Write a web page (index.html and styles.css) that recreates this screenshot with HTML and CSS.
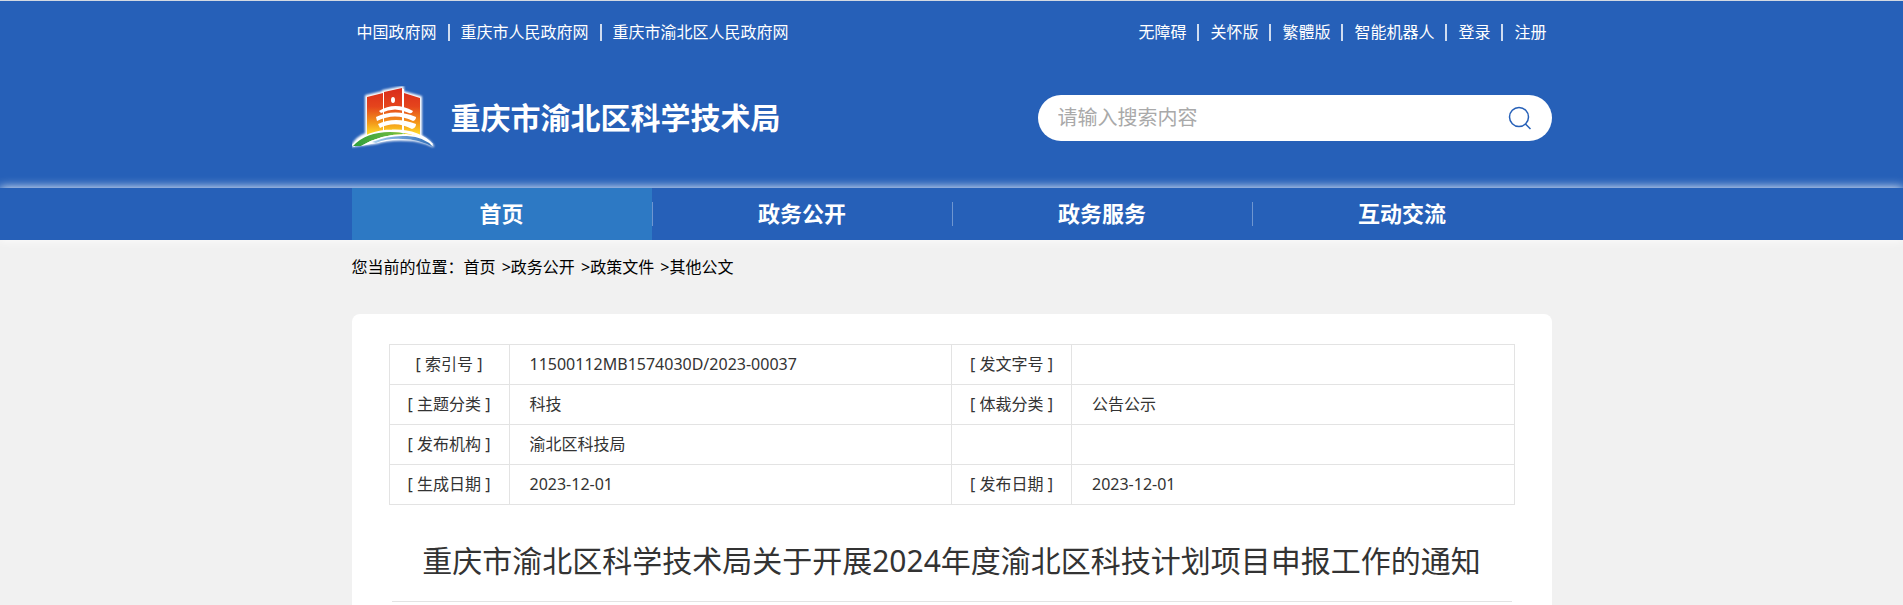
FILE: index.html
```html
<!DOCTYPE html>
<html lang="zh-CN">
<head>
<meta charset="utf-8">
<meta name="viewport" content="width=device-width, initial-scale=1">
<title>重庆市渝北区科学技术局</title>
<link rel="stylesheet" href="styles.css">
</head>
<body>
<header class="header">
  <div class="container">
    <div class="topbar">
      <nav class="toplinks" aria-label="政府网站">
        <a href="#">中国政府网</a>
        <a href="#">重庆市人民政府网</a>
        <a href="#">重庆市渝北区人民政府网</a>
      </nav>
      <nav class="toplinks" aria-label="工具">
        <a href="#">无障碍</a>
        <a href="#">关怀版</a>
        <a href="#">繁體版</a>
        <a href="#">智能机器人</a>
        <a href="#">登录</a>
        <a href="#">注册</a>
      </nav>
    </div>
    <div class="masthead">
      <a class="brand" href="#">
        <svg class="brand-logo" viewBox="0 0 84 64" aria-hidden="true">
          <defs>
            <linearGradient id="wall" gradientUnits="userSpaceOnUse" x1="0" y1="2" x2="0" y2="49">
              <stop offset="0" stop-color="#d92b1c"/>
              <stop offset=".4" stop-color="#e5451c"/>
              <stop offset=".75" stop-color="#f49a1a"/>
              <stop offset="1" stop-color="#ffe02a"/>
            </linearGradient>
            <linearGradient id="river" x1="0" y1="0" x2="1" y2="0">
              <stop offset="0" stop-color="#a9d0f0"/>
              <stop offset="1" stop-color="#2c6cb8"/>
            </linearGradient>
            <linearGradient id="hill" x1="0" y1="0" x2="1" y2="0">
              <stop offset="0" stop-color="#2f9e3c"/>
              <stop offset="1" stop-color="#7cc242"/>
            </linearGradient>
            <filter id="glow" x="-10%" y="-10%" width="120%" height="120%">
              <feGaussianBlur stdDeviation="1"/>
            </filter>
          </defs>
          <path filter="url(#glow)" fill="#fff" stroke="#fff" stroke-width="2" stroke-linejoin="round" d="M14 48V10L31 6V5L51 1V6L69 11V50Q77 54 81 60Q68 54 55 54Q38 53 24 57L0 60Q5 51 14 48Z"/>
          <path fill="url(#wall)" d="M15 11L31 7V49H15ZM32 6L50 2V49H32ZM52 7L68 12V50H52Z"/>
          <path fill="#fff" d="M31 7H32V30H31ZM50 3H52V30H50Z"/>
          <ellipse cx="41" cy="14" rx="2" ry="3" fill="#fff"/>
          <g fill="#fff">
            <path d="M27 25Q43 15 61 25Q60 28 57 27Q43 20 29 27Z"/>
            <path d="M24 31Q43 22 64 31Q64 34 61 35Q43 26 25 35Z"/>
            <path d="M26 38Q43 30 64 38Q64 42 60 43Q43 34 28 42Z"/>
          </g>
          <path fill="none" stroke="#fff" stroke-width="3" d="M1 60Q17 45 40 45Q66 44 80 59"/>
          <path fill="url(#hill)" d="M1 60Q14 46 38 46Q48 46 54 48Q29 48 9 60Z"/>
          <path fill="#fff" d="M9 60Q29 48 54 48Q74 50 81 60Q60 48 24 57Z"/>
          <path fill="url(#river)" d="M20 56Q37 49 55 50Q73 51 81 61Q66 53 51 53Q36 52 24 57Z"/>
        </svg>
        <span class="brand-name">重庆市渝北区科学技术局</span>
      </a>
      <form class="search" role="search">
        <input class="search-input" type="text" placeholder="请输入搜索内容" aria-label="请输入搜索内容">
        <button class="search-button" type="button" aria-label="搜索">
          <svg viewBox="0 0 24 24" width="24" height="24" aria-hidden="true">
            <circle cx="11" cy="11" r="9.5"/>
            <path d="M17.5 18L22.5 23"/>
          </svg>
        </button>
      </form>
    </div>
  </div>
</header>
<nav class="mainnav" aria-label="主导航">
  <ul class="container mainnav-list">
    <li><a class="active" href="#">首页</a></li>
    <li><a href="#">政务公开</a></li>
    <li><a href="#">政务服务</a></li>
    <li><a href="#">互动交流</a></li>
  </ul>
</nav>
<main class="container">
  <div class="crumbs">您当前的位置：<a href="#">首页</a> &gt;<a href="#">政务公开</a> &gt;<a href="#">政策文件</a> &gt;<a href="#">其他公文</a></div>
  <article class="card">
    <table class="meta">
      <tr><th scope="row">[ 索引号 ]</th><td>11500112MB1574030D/2023-00037</td><th scope="row">[ 发文字号 ]</th><td></td></tr>
      <tr><th scope="row">[ 主题分类 ]</th><td>科技</td><th scope="row">[ 体裁分类 ]</th><td>公告公示</td></tr>
      <tr><th scope="row">[ 发布机构 ]</th><td>渝北区科技局</td><th></th><td></td></tr>
      <tr><th scope="row">[ 生成日期 ]</th><td>2023-12-01</td><th scope="row">[ 发布日期 ]</th><td>2023-12-01</td></tr>
    </table>
    <h1 class="title">重庆市渝北区科学技术局关于开展2024年度渝北区科技计划项目申报工作的通知</h1>
  </article>
</main>
</body>
</html>
```

FILE: styles.css
```css
* {
  box-sizing: border-box;
}

body {
  margin: 0;
  background: #f1f1f1;
  color: #000;
  font: 16px/24px "Noto Sans", "Noto Sans CJK SC", sans-serif;
}

a {
  color: inherit;
  text-decoration: none;
}

.container {
  max-width: 1200px;
  margin: 0 auto;
}

.header {
  border-top: 1px solid #d3d9e2;
  background: #2660b8;
  color: #fff;
}

.topbar {
  display: flex;
  justify-content: space-between;
  padding: 19px 5px 0;
}

.toplinks {
  display: flex;
}

.toplinks a {
  display: flex;
  align-items: center;
}

.toplinks a + a::before {
  content: "";
  width: 2px;
  height: 17px;
  margin: 0 11px;
  background: #cfdcf0;
}

.masthead {
  display: flex;
  justify-content: space-between;
  align-items: center;
  height: 144px;
  padding-top: 4px;
}

.brand {
  display: flex;
  align-items: center;
  gap: 15px;
}

.brand-logo {
  width: 84px;
  height: 64px;
}

.brand-name {
  font-size: 30px;
  line-height: 40px;
  font-weight: 700;
}

.search {
  display: flex;
  align-items: center;
  width: 514px;
  height: 46px;
  padding: 0 20px;
  border-radius: 23px;
  background: #fff;
}

.search-input {
  flex: 1;
  min-width: 0;
  padding: 0;
  border: 0;
  outline: 0;
  background: none;
  color: #333;
  font: inherit;
  font-size: 20px;
  line-height: 30px;
}

.search-input::placeholder {
  color: #a9a9a9;
  opacity: 1;
}

.search-button {
  display: flex;
  padding: 0;
  border: 0;
  background: none;
  cursor: pointer;
}

.search-button svg {
  fill: none;
  stroke: #2660b8;
  stroke-width: 1.5;
}

.mainnav {
  background: #2660b8;
  box-shadow: 0 0 10px #fff;
}

.mainnav-list {
  display: flex;
  padding: 0;
  list-style: none;
}

.mainnav-list li {
  display: flex;
  flex: 1;
  align-items: center;
}

.mainnav-list li + li::before {
  content: "";
  width: 1px;
  height: 24px;
  background: #6f96d0;
}

.mainnav-list a {
  flex: 1;
  padding-bottom: 2px;
  color: #fff;
  font-size: 22px;
  line-height: 50px;
  font-weight: 700;
  text-align: center;
}

.mainnav-list .active {
  background: #2d79c4;
}

.crumbs {
  padding: 15px 0 35px;
}

.crumbs a:not(:last-child) {
  margin-right: 2px;
}

.card {
  padding: 30px 37px;
  border-radius: 8px;
  background: #fff;
  color: #333;
}

.meta {
  width: 100%;
  table-layout: fixed;
  border-collapse: collapse;
}

.meta th,
.meta td {
  height: 40px;
  padding: 0 0 2px;
  border: 1px solid #e3e3e3;
}

.meta th {
  width: 120px;
  font-weight: 400;
}

.meta td {
  padding: 0 20px 2px;
}

.title {
  margin: 30px 3px 0;
  padding: 5px 0 19px;
  border-bottom: 1px solid #e3e3e3;
  font-size: 30px;
  line-height: 42px;
  font-weight: 400;
  text-align: center;
}
```
